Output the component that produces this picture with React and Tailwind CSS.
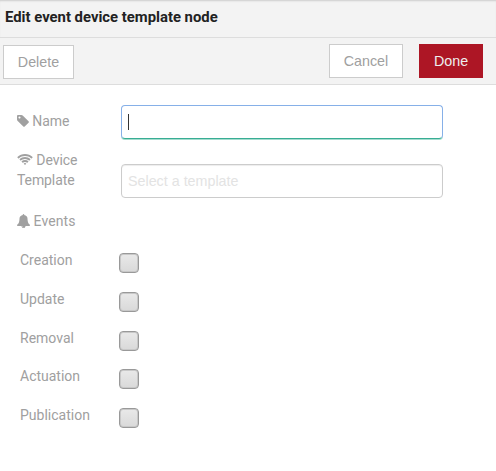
const TagIcon = () => (
  <svg viewBox="128 0 1536 1792" className="-mt-0.5 inline-block h-[14px] w-3 fill-current">
    <path d="M576 448q0-53-37.5-90.5t-90.5-37.5-90.5 37.5-37.5 90.5 37.5 90.5 90.5 37.5 90.5-37.5 37.5-90.5zm1067 576q0 53-37 90l-491 492q-39 37-91 37-53 0-90-37l-715-716q-38-37-64.5-101t-26.5-117v-416q0-52 38-90t90-38h416q53 0 117 26.5t102 64.5l715 714q37 39 37 91z" />
  </svg>
);

const WifiIcon = () => (
  <svg viewBox="0 0 2048 1792" className="-mt-0.5 inline-block h-[14px] w-4 fill-current">
    <path d="M1024 1523q-20 0-93-73.5t-73-93.5q0-32 62.5-54t103.5-22 103.5 22 62.5 54q0 20-73 93.5t-93 73.5zm270-271q-2 0-40-25t-101.5-50-128.5-25-128.5 25-101 50-40.5 25q-18 0-93.5-75t-75.5-93q0-13 10-23 78-77 196-121t233-44 233 44 196 121q10 10 10 23 0 18-75.5 93t-93.5 75zm273-272q-11 0-23-8-136-105-252-154.5t-268-49.5q-85 0-170.5 22t-149 53-113.5 62-79 53-31 22q-17 0-92-75t-75-93q0-12 10-22 132-132 320-205t380-73 380 73 320 205q10 10 10 22 0 18-75 93t-92 75zm271-271q-11 0-22-9-179-157-371.5-236.5t-420.5-79.5-420.5 79.5-371.5 236.5q-11 9-22 9-17 0-92.5-75t-75.5-93q0-13 10-23 187-186 445-288t527-102 527 102 445 288q10 10 10 23 0 18-75.5 93t-92.5 75z" />
  </svg>
);

const BellIcon = () => (
  <svg viewBox="64 0 1664 1792" className="-mt-0.5 inline-block h-[14px] w-[13px] fill-current">
    <path d="M912 1696q0-16-16-16-59 0-101.5-42.5t-42.5-101.5q0-16-16-16t-16 16q0 73 51.5 124.5t124.5 51.5q16 0 16-16zm816-288q0 52-38 90t-90 38h-448q0 106-75 181t-181 75-181-75-75-181h-448q-52 0-90-38t-38-90q50-42 91-88t85-119.5 74.5-158.5 50-206 19.5-260q0-152 117-282.5t307-158.5q-8-19-8-39 0-40 28-68t68-28 68 28 28 68q0 20-8 39 190 28 307 158.5t117 282.5q0 139 19.5 260t50 206 74.5 158.5 85 119.5 91 88z" />
  </svg>
);

const buttonFont = "font-['Liberation_Sans',Arial,sans-serif] text-[14.3px] leading-5";

const events = [
  { name: "Creation", height: "h-[39px]" },
  { name: "Update", height: "h-[39px]" },
  { name: "Removal", height: "h-[38px]" },
  { name: "Actuation", height: "h-[39px]" },
  { name: "Publication", height: "h-[39px]" },
];

export default function App() {
  return (
    <div className="h-[471px] w-[496px] overflow-hidden bg-white font-[Roboto,sans-serif] text-sm leading-5 text-[#a0a0a0]">
      <header className="h-[38px] border-b border-[#ddd] bg-[#f3f3f3] pl-[5px] pt-[7px] text-[14.85px] font-bold text-[#222] shadow-[inset_0_2px_2px_-1px_#ccc]">
        Edit event device template node
      </header>
      <div className="flex h-[47px] items-start border-b border-[#ddd] bg-[#f3f3f3] pl-[3px] pr-[13px] pt-[6px]">
        <button className={`${buttonFont} mt-px h-[34px] w-[71px] border border-[#ccc] bg-white`}>Delete</button>
        <button className={`${buttonFont} ml-auto h-[34px] w-[74px] border border-[#ccc] bg-white`}>Cancel</button>
        <button className={`${buttonFont} ml-4 h-[34px] w-16 bg-[#ad1625] text-[#eee]`}>Done</button>
      </div>
      <form className="pl-[17px] pt-5">
        <div className="flex h-[45px]">
          <label className="w-[104px] pt-[6px] tracking-[-0.1px]"><TagIcon /> Name</label>
          <div className="flex h-[34px] w-[322px] items-center rounded-[4px] border border-[#86b0e8] border-b-[#38ad93] pl-[6px] shadow-[0_1px_0_#a5dccf]">
            <span className="h-4 w-px bg-[#333]" />
          </div>
        </div>
        <div className="flex h-[61px]">
          <label className="w-[104px] pr-7 tracking-[-0.1px]"><WifiIcon /> Device Template</label>
          <input
            placeholder="Select a template"
            className="mt-[14px] h-[34px] w-[322px] rounded-[4px] border border-[#ccc] pl-[6px] font-['Liberation_Sans',Arial,sans-serif] text-[14.3px] shadow-[inset_0_1px_1px_rgba(0,0,0,0.075)] placeholder:text-[#e3e3e3]"
          />
        </div>
        <div className="h-[39px] tracking-[0.1px]"><BellIcon /> Events</div>
        {events.map(({ name, height }) => (
          <div key={name} className={`flex ${height} pl-[3px]`}>
            <label className="w-[99px]">{name}</label>
            <span className="mt-[3px] size-5 rounded-[4px] border border-[#999] bg-linear-to-b from-[#e9e9e9] to-[#d9d9d9] shadow-[inset_0_0_0_1px_#c8c8c8]" />
          </div>
        ))}
      </form>
    </div>
  );
}
